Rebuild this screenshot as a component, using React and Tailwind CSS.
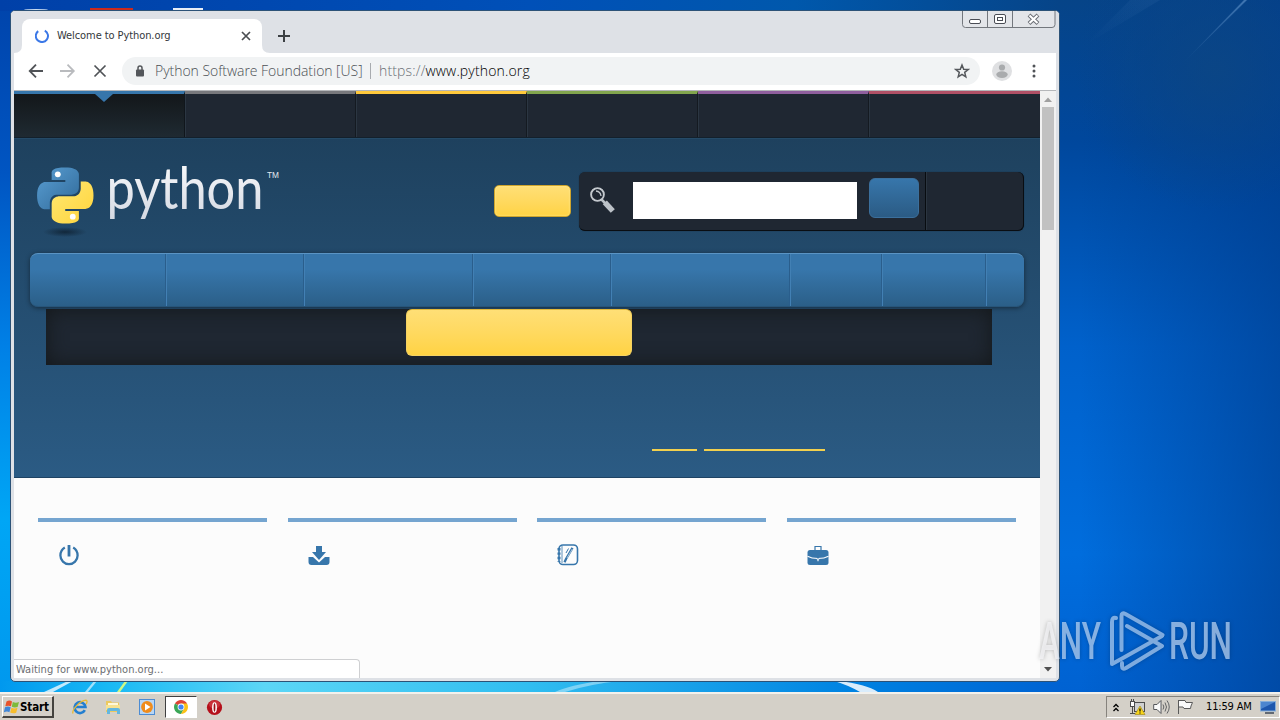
import React from 'react';

const SNAKE =
  'M14.25.18l.9.2.73.26.59.3.45.32.34.34.25.34.16.33.1.3.04.26.02.2-.01.13V8.5l-.05.63-.13.55-.21.46-.26.38-.3.31-.33.25-.35.19-.35.14-.33.1-.3.07-.26.04-.21.02H8.77l-.69.05-.59.14-.5.22-.41.27-.33.32-.27.35-.2.36-.15.37-.1.35-.07.32-.04.27-.02.21v3.06H3.17l-.21-.03-.28-.07-.32-.12-.35-.18-.36-.26-.36-.36-.35-.46-.32-.59-.28-.73-.21-.88-.14-1.05-.05-1.23.06-1.22.16-1.04.24-.87.32-.71.36-.57.4-.44.42-.33.42-.24.4-.16.36-.1.32-.05.24-.01h.16l.06.01h8.16v-.83H6.18l-.01-2.75-.02-.37.05-.34.11-.31.17-.28.25-.26.31-.23.38-.2.44-.18.51-.15.58-.12.64-.1.71-.06.77-.04.84-.02 1.27.05z';

function Wallpaper() {
  return (
    <svg className="absolute inset-0" width="1280" height="692" viewBox="0 0 1280 692">
      <defs>
        <linearGradient id="wl" x1="0" y1="0" x2="0" y2="1">
          <stop offset="0" stopColor="#0044ab" />
          <stop offset=".25" stopColor="#0055c2" />
          <stop offset=".5" stopColor="#0080e6" />
          <stop offset=".75" stopColor="#00a6f5" />
          <stop offset="1" stopColor="#0098ee" />
        </linearGradient>
        <linearGradient id="wr" x1="0" y1="0" x2="0" y2="1">
          <stop offset="0" stopColor="#064488" />
          <stop offset=".2" stopColor="#00479c" />
          <stop offset=".5" stopColor="#0061cb" />
          <stop offset=".8" stopColor="#006ddd" />
          <stop offset="1" stopColor="#0062d2" />
        </linearGradient>
        <linearGradient id="wd" x1="0" y1="0" x2="1" y2="0">
          <stop offset="0" stopColor="#003c8c" stopOpacity="0" />
          <stop offset="1" stopColor="#003c8c" stopOpacity=".62" />
        </linearGradient>
        <radialGradient id="wk" cx="1215" cy="70" r="140" gradientUnits="userSpaceOnUse">
          <stop offset="0" stopColor="#0c4684" stopOpacity=".85" />
          <stop offset="1" stopColor="#0c4684" stopOpacity="0" />
        </radialGradient>
        <linearGradient id="wt" x1="0" y1="0" x2="1" y2="0">
          <stop offset="0" stopColor="#0040a8" />
          <stop offset=".5" stopColor="#0050b8" />
          <stop offset=".75" stopColor="#0058ac" />
          <stop offset="1" stopColor="#064488" />
        </linearGradient>
        <linearGradient id="wb" x1="0" y1="0" x2="1" y2="0">
          <stop offset="0" stopColor="#0098ee" />
          <stop offset=".1" stopColor="#18b8f4" />
          <stop offset=".25" stopColor="#5cd6f6" />
          <stop offset=".5" stopColor="#30bdf0" />
          <stop offset=".8" stopColor="#0083e2" />
          <stop offset="1" stopColor="#0062d2" />
        </linearGradient>
        <linearGradient id="ray" x1="1" y1="0" x2="0" y2="1">
          <stop offset="0" stopColor="#6fa0d4" stopOpacity=".55" />
          <stop offset="1" stopColor="#6fa0d4" stopOpacity="0" />
        </linearGradient>
      </defs>
      <rect width="1060" height="692" fill="url(#wl)" />
      <rect x="1050" width="230" height="692" fill="url(#wr)" />
      <rect x="1080" width="200" height="692" fill="url(#wd)" />
      <rect x="1050" width="230" height="240" fill="url(#wk)" />
      <rect width="1060" height="11" fill="url(#wt)" />
      <rect y="681" width="1060" height="11" fill="url(#wb)" />
      <path d="M1247 0l-3 0L1182 64z" fill="url(#ray)" />
      <path d="M1160 0h-30L1085 45z" fill="url(#ray)" opacity=".15" />
      <path d="M44 692l24-11h5l-20 11z" fill="#fff" opacity=".75" />
      <path d="M85 692l9-11h3l-9 11z" fill="#fff" opacity=".6" />
      <path d="M117 692l8-11h3l-8 11z" fill="#e2ff7a" opacity=".9" />
      <path d="M565 692q25-8 55-11h-20q-30 4-45 11z" fill="#fff" opacity=".4" />
      <path d="M838 681q28 3 40 11h-18q-12-7-26-11z" fill="#fff" opacity=".85" />
      <ellipse cx="36" cy="10" rx="12" ry="1" fill="#c9dcf0" />
      <rect x="90" y="8" width="43" height="3" fill="#cc2a1c" />
      <rect x="173" y="8" width="30" height="3" fill="#e8eef6" />
    </svg>
  );
}

function CaptionButtons() {
  return (
    <svg className="shrink-0" width="94" height="18" viewBox="0 0 94 18" fill="none">
      <path d="M.5 0V13.500q0 3 3 3H90q3 0 3-3V0" stroke="#73777d" fill="#e3e5e9" />
      <path d="M25.500 0V16M50.500 0V16" stroke="#73777d" />
      <rect x="7.500" y="8.500" width="11" height="4" rx="1.500" fill="#fff" stroke="#4a4d55" />
      <rect x="32.500" y="3.500" width="11" height="9" rx="1.500" fill="#fff" stroke="#4a4d55" />
      <rect x="35.500" y="6.500" width="5" height="3" fill="#fff" stroke="#4a4d55" />
      <path d="M67 4l9 8.500M76 4l-9 8.500" stroke="#6a6d74" strokeWidth="4" />
      <path d="M67.500 4.500l8 7.500M75.500 4.500l-8 7.500" stroke="#fff" strokeWidth="2.200" />
    </svg>
  );
}

function TabStrip() {
  return (
    <div className="flex h-[42px] bg-[#dee1e6] pl-[3px]">
      <div className="flex items-end">
        <svg width="8" height="8"><path d="M8 0V8H0Q8 8 8 0" fill="#fff" /></svg>
      </div>
      <div className="mt-2 flex h-[34px] w-[240px] items-center rounded-t-lg bg-white pl-[13px]">
        <svg width="14" height="14" viewBox="0 0 14 14" fill="none">
          <path d="M9.800 1.600A6.100 6.100 0 1 1 3.200 2.100" stroke="#3b78e7" strokeWidth="2" />
        </svg>
        <span className="ml-2 w-[186px] whitespace-nowrap pt-px text-[11px] tracking-[-0.08px] text-[#34373b]">Welcome to Python.org</span>
        <svg className="-ml-[2px]" width="10" height="10" viewBox="0 0 10 10"><path d="M1 1l8 8M9 1L1 9" stroke="#4b4e52" strokeWidth="1.700" /></svg>
      </div>
      <div className="flex items-end">
        <svg width="8" height="8"><path d="M0 0V8H8Q0 8 0 0" fill="#fff" /></svg>
      </div>
      <svg className="ml-2 mt-[19px]" width="12" height="12" viewBox="0 0 12 12"><path d="M6 0V12M0 6H12" stroke="#3c4043" strokeWidth="2" /></svg>
      <div className="ml-auto mr-[3px]"><CaptionButtons /></div>
    </div>
  );
}

function Toolbar() {
  return (
    <div className="flex h-[37px] items-center bg-white pb-[2px] pl-[14px] text-[#5f6368]">
      <svg width="16" height="14" viewBox="0 0 16 14" fill="none" stroke="#505357" strokeWidth="1.800"><path d="M15 7H2M8 .7L1.700 7L8 13.300" /></svg>
      <svg className="ml-4" width="16" height="14" viewBox="0 0 16 14" fill="none" stroke="#b9bbbe" strokeWidth="1.800"><path d="M0 7H13M7.500 .7L13.800 7L7.500 13.300" /></svg>
      <svg className="ml-[17px]" width="14" height="14" viewBox="0 0 14 14" stroke="#505357" strokeWidth="1.700"><path d="M1.500 1.500l11 11M12.500 1.500l-11 11" /></svg>
      <div className="ml-[15px] flex h-7 w-[858px] items-center rounded-full bg-[#f1f3f4] pl-[13px]">
        <svg width="10" height="12" viewBox="0 0 10 12"><path d="M3 5V3a2 2 0 0 1 4 0V5" fill="none" stroke="#54575b" strokeWidth="1.500" /><rect x="1" y="4.500" width="8" height="7" rx="1" fill="#54575b" /></svg>
        <span className="ml-[10px] w-[210px] whitespace-nowrap font-['Open_Sans'] text-[14px] font-light tracking-[-0.04px] text-[#4c5055]">Python Software Foundation [US]</span>
        <span className="ml-[5px] h-4 w-px bg-[#a8abaf]" />
        <span className="ml-2 whitespace-nowrap font-['Open_Sans'] text-[14px] font-light tracking-[0.15px] text-[#6b6f74]">https://<span className="text-black">www.python.org</span></span>
        <svg className="ml-auto mr-[10px]" width="16" height="16" viewBox="0 0 16 16" fill="none" stroke="#55585c" strokeWidth="1.500"><path d="M8 2l1.700 4.200 4.500.3-3.500 2.900 1.100 4.400L8 11.400l-3.800 2.400 1.100-4.400L1.800 6.500l4.500-.3z" /></svg>
      </div>
      <svg className="ml-3" width="20" height="20" viewBox="0 0 20 20"><circle cx="10" cy="10" r="10" fill="#dfe0e2" /><circle cx="10" cy="6.500" r="3.100" fill="#a9abad" /><ellipse cx="10" cy="13.600" rx="5.700" ry="3.300" fill="#a9abad" /></svg>
      <svg className="ml-5" width="4" height="14" viewBox="0 0 4 14" fill="#505357"><circle cx="2" cy="2" r="1.500" /><circle cx="2" cy="7" r="1.500" /><circle cx="2" cy="12" r="1.500" /></svg>
    </div>
  );
}

function MetaNav() {
  const cell = 'w-[171px] border-t-[3px] border-r border-r-[#141a21] shadow-[inset_1px_0_0_#2b3642]';
  return (
    <div className="flex h-[47px] border-b border-[#13202c] bg-[#1f2732]">
      <div className="flex w-[171px] justify-center border-r border-t-[3px] border-r-[#10161c] border-t-[#3776ab] bg-linear-to-b from-[#13171a] to-[#1f2a32] pl-[9px]">
        <svg width="18" height="8"><path d="M0 0H18L9 8z" fill="#3776ab" /></svg>
      </div>
      <div className={`${cell} border-t-[#78797d]`} />
      <div className={`${cell} border-t-[#ffc93c]`} />
      <div className={`${cell} border-t-[#82a64e]`} />
      <div className={`${cell} border-t-[#8f5f9e]`} />
      <div className="w-[171px] border-t-[3px] border-t-[#b05066] shadow-[inset_1px_0_0_#2b3642]" />
    </div>
  );
}

function PythonLogo() {
  return (
    <svg className="overflow-visible" width="250" height="76" viewBox="36 164 250 76">
      <defs>
        <linearGradient id="pb" x1="0" y1="0" x2="1" y2="1"><stop offset="0" stopColor="#5a9fd4" /><stop offset="1" stopColor="#306998" /></linearGradient>
        <linearGradient id="py" x1="1" y1="1" x2="0" y2="0"><stop offset="0" stopColor="#ffe873" /><stop offset="1" stopColor="#ffd43b" /></linearGradient>
        <linearGradient id="pt" x1="0" y1="0" x2="0" y2="1"><stop offset="0" stopColor="#fff" /><stop offset="1" stopColor="#d3d8e2" /></linearGradient>
        <radialGradient id="ps"><stop offset="0" stopColor="#0c1c2b" stopOpacity=".75" /><stop offset="1" stopColor="#0c1c2b" stopOpacity="0" /></radialGradient>
      </defs>
      <ellipse cx="65" cy="232" rx="22" ry="5" fill="url(#ps)" />
      <g transform="translate(37.200 167.400) scale(2.340)">
        <path d={SNAKE} fill="url(#pb)" />
        <path d={SNAKE} fill="url(#py)" transform="rotate(180 12 12)" />
        <circle cx="8.800" cy="2.950" r="1.250" fill="#fff" />
        <circle cx="15.200" cy="21.050" r="1.250" fill="#fff" />
      </g>
      <text x="106.500" y="209" textLength="157" lengthAdjust="spacingAndGlyphs" fontFamily="Lato" fontSize="58" fontWeight="400" fill="url(#pt)">python</text>
      <text x="267" y="178" textLength="12" lengthAdjust="spacingAndGlyphs" fontFamily="Liberation Sans" fontSize="8.500" fill="#e4e9ef">TM</text>
    </svg>
  );
}

const TABS = ['w-[136px]', 'w-[138px]', 'w-[169px]', 'w-[138px]', 'w-[179px]', 'w-[92px]', 'w-[104px]'];

function Header() {
  return (
    <div className="flex h-[340px] flex-col border-b border-[#1e4364] bg-linear-to-b from-[#1e415e] to-[#2b5b84] pl-4 shadow-[inset_0_1px_0_#254a67]">
      <div className="flex h-[115px]">
        <div className="ml-[6px] mt-[26px] w-[458px]"><PythonLogo /></div>
        <div className="mt-[47px] h-8 w-[77px] rounded-[5px] border border-[#cfa52c] bg-linear-to-b from-[#ffdf76] to-[#ffd343] shadow-[inset_0_0_2px_#ffee9f]" />
        <div className="ml-2 mt-[34px] flex h-[59px] w-[445px] rounded-md border-b border-r border-[#090d12] bg-[#1f2732] shadow-[0_0_1px_#142330]">
          <svg className="ml-[11px] mt-[15px]" width="27" height="28" viewBox="0 0 27 28">
            <path d="M11.500 12.500l4 4" stroke="#bcc2c8" strokeWidth="2.500" />
            <path d="M14.800 15.300l8 8.700" stroke="#bcc2c8" strokeWidth="5.500" />
            <circle cx="7.500" cy="7.500" r="6.400" fill="#1f2732" stroke="#c3c8cd" strokeWidth="1.900" />
            <path d="M6 4q4.500 .5 5 5" fill="none" stroke="#c3c8cd" strokeWidth="1.300" />
          </svg>
          <div className="ml-4 mt-[10px] h-[37px] w-[224px] bg-white" />
          <div className="ml-3 mt-[6px] h-10 w-[50px] rounded-md border border-[#3b6f9c] bg-linear-to-b from-[#3776ab] to-[#2b5b84]" />
          <div className="ml-[6px] h-full w-px bg-[#080c10]" />
          <div className="h-full w-px bg-[#2b3540]" />
        </div>
      </div>
      <div className="flex h-[54px] w-[994px] rounded-lg border-b border-t border-b-[#285579] border-t-[#5a94c4] bg-linear-to-b from-[#3776ab] from-30% to-[#2b5f88] shadow-[0_1px_5px_rgba(0,0,0,.45)]">
        {TABS.map((w, i) => (
          <div key={i} className={`${w} flex justify-end`}>
            <div className="w-px bg-[#2a5e8c]" />
            <div className="-mr-px w-px bg-[#4280b4]" />
          </div>
        ))}
      </div>
      <div className="ml-4 mt-[2px] flex h-14 w-[946px] justify-center bg-[#1f2732] shadow-[inset_0_0_20px_#14181a]">
        <div className="h-[47px] w-[226px] rounded-md border border-[#f5d262] border-t-[#e3b93a] bg-linear-to-b from-[#ffdf76] to-[#ffd343]" />
      </div>
      <div className="ml-[622px] mt-[84px] flex gap-[7px]">
        <div className="h-[2px] w-[45px] bg-[#f2d04e]" />
        <div className="h-[2px] w-[121px] bg-[#f2d04e]" />
      </div>
    </div>
  );
}

const PowerIcon = () => (
  <svg width="22" height="22" viewBox="0 0 22 22" fill="none" stroke="#3776ab" strokeWidth="2.300">
    <path d="M6.800 3.400Q2.400 6 2.400 11.500A8.500 8.500 0 0 0 19.600 11.500Q19.600 6 15.200 3.400" />
    <path d="M11 1V12.500" strokeWidth="2.800" />
  </svg>
);
const DownloadIcon = () => (
  <svg width="22" height="22" viewBox="0 0 22 22" fill="#3776ab">
    <path d="M8 2h6v6h4l-7 8L4 8h4z" />
    <path d="M.5 13H5l6 5.500L17 13h4.500v5q0 3-3 3h-15q-3 0-3-3z" />
  </svg>
);
const DocIcon = () => (
  <svg width="22" height="22" viewBox="0 0 22 22" fill="none" stroke="#3776ab">
    <rect x="2" y="1" width="18.500" height="19.500" rx="4" strokeWidth="1.600" />
    <path d="M2 4v14" strokeWidth="3" strokeDasharray="2.400 2" />
    <path d="M5 2v17" strokeWidth=".8" />
    <path d="M15.500 3.800L9 15l-1.500 3.300" strokeWidth="2.300" />
    <path d="M11.500 4.500L9 9" strokeWidth="1" />
    <path d="M15.300 5L10 14" stroke="#fcfcfc" strokeWidth=".6" />
  </svg>
);
const CaseIcon = () => (
  <svg width="22" height="22" viewBox="0 0 22 22">
    <path d="M8 6V2.500h6V6" fill="none" stroke="#3776ab" strokeWidth="1.200" />
    <rect x=".5" y="6" width="21" height="15" rx="2.500" fill="#3776ab" />
    <path d="M.5 12.200q4 2.300 10.500 2.300t10.500-2.300" fill="none" stroke="#fcfcfc" strokeWidth="1.100" />
    <path d="M9.300 14.200h3.400l-1.700 3.600z" fill="#fcfcfc" />
    <path d="M10.300 13h1.400l-.7 3.500z" fill="#3776ab" />
  </svg>
);

function Widgets() {
  return (
    <div className="flex min-h-0 flex-1 flex-col bg-[#fcfcfc]">
      <div className="ml-6 mt-10 grid h-[100px] w-[978px] grid-cols-4 gap-x-[20.600px]">
        {[PowerIcon, DownloadIcon, DocIcon, CaseIcon].map((Icon, i) => (
          <div key={i} className="border-t-4 border-[#75a5d0] pl-5 pt-[22px]"><Icon /></div>
        ))}
      </div>
      <div className="mt-auto h-[19px] w-[346px] rounded-tr border-r border-t border-[#cfd0d2] bg-white pl-[2px] text-[11px] leading-[19px] tracking-[0.02px] text-[#6b6e72]">Waiting for www.python.org...</div>
    </div>
  );
}

function Scrollbar() {
  return (
    <div className="flex w-4 flex-col items-center bg-[#f1f1f1]">
      <svg width="16" height="16"><path d="M4 11h8L8 6.500z" fill="#a0a0a0" /></svg>
      <div className="h-[123px] w-3 bg-[#c1c1c1]" />
      <svg className="mt-auto" width="16" height="17"><path d="M4 6h8L8 10.500z" fill="#505050" /></svg>
    </div>
  );
}

function Browser() {
  return (
    <div className="absolute left-[10px] top-[10px] flex h-[672px] w-[1050px] flex-col overflow-hidden rounded-[5px] border border-[#2c5277] bg-[#dee1e6]">
      <TabStrip />
      <div className="mx-[3px] flex min-h-0 flex-1 flex-col">
        <Toolbar />
        <div className="h-px bg-[#b5b7ba]" />
        <div className="mb-[3px] flex min-h-0 flex-1">
          <div className="flex w-[1026px] flex-col">
            <MetaNav />
            <Header />
            <Widgets />
          </div>
          <Scrollbar />
        </div>
      </div>
    </div>
  );
}

function Watermark() {
  return (
    <svg className="absolute left-[1020px] top-[590px] drop-shadow-[0_0_2px_rgba(0,0,0,.3)]" width="230" height="100" viewBox="1020 590 230 100">
      <defs>
        <linearGradient id="wm" x1="1039" y1="0" x2="1075" y2="0" gradientUnits="userSpaceOnUse">
          <stop offset=".5" stopColor="#f4f5f7" />
          <stop offset=".6" stopColor="#b4d0f2" />
        </linearGradient>
      </defs>
      <g opacity=".75" fontFamily="Roboto" fontSize="51" fontWeight="500">
        <text x="1039" y="659" textLength="62" lengthAdjust="spacingAndGlyphs" fill="url(#wm)">ANY</text>
        <text x="1169" y="659" textLength="63" lengthAdjust="spacingAndGlyphs" fill="#b4d0f2">RUN</text>
      </g>
      <g fill="none" stroke="#a9caf0" strokeWidth="4" strokeLinejoin="round" strokeLinecap="round" opacity=".75">
        <path d="M1116 618q-4-1-4 4v42l11-6 39-22" />
        <path d="M1121.500 650V616q0-4 4-2l37 21" />
        <path d="M1127 626l35 20-36 22q-4 2-4-2v-3" />
      </g>
    </svg>
  );
}

function Taskbar() {
  return (
    <div className="relative flex h-7 items-center border-t-2 border-[#f3f1ec] bg-[#d4d0c8] pl-[2px]">
      <div className="flex h-[22px] w-[52px] items-center border border-b-2 border-r-2 border-b-[#45433f] border-l-white border-r-[#45433f] border-t-white pl-px">
        <svg width="16" height="16" viewBox="0 0 16 16">
          <path d="M2.500 2.500q3-1.800 5.500 0L7 7.300Q4.500 6 1.300 7.300z" fill="#e8532b" />
          <path d="M8.800 3q3 1.500 6.200 0l-1.400 5Q10.500 9 7.800 7.700z" fill="#7dba3a" />
          <path d="M1 8.300q3-1.500 5.700 0l-1.300 4.900Q3 12-.2 13.300z" fill="#3f86d8" />
          <path d="M7.500 8.700q2.700 1.500 6 0l-1.300 5Q9 15 6.200 13.500z" fill="#f7bd2c" />
        </svg>
        <span className="pt-[2px] text-[11.500px] font-bold tracking-[-0.1px] text-black">Start</span>
      </div>
      <svg className="ml-[18px]" width="16" height="16" viewBox="0 0 16 16" fill="none">
        <path d="M12.800 11.200A5.400 5.400 0 1 1 13.400 8H4" stroke="#247fd0" strokeWidth="2.700" />
        <path d="M1 14.500C-.5 11 8 1.500 14 1.200q2 .5.200 4" stroke="#e8b932" strokeWidth="1.300" />
      </svg>
      <svg className="ml-[17px]" width="16" height="16" viewBox="0 0 16 16">
        <path d="M1 2h5l1 1.500h7V13H1z" fill="#ecc95f" />
        <path d="M3 4h10v3H3z" fill="#fff8da" /><path d="M1 6h14v5H1z" fill="#f7e291" />
        <path d="M2 15V11q0-2 2-2h9q2 0 2 2v4h-3v-3H5v3z" fill="#64b7df" />
      </svg>
      <svg className="ml-[18px]" width="16" height="16" viewBox="0 0 16 16">
        <rect x=".5" y=".5" width="15" height="15" fill="#b8d6f4" stroke="#4c8cd3" />
        <circle cx="8" cy="8" r="5.900" fill="#f08c1b" /><path d="M6 4.500L11.500 8L6 11.500z" fill="#fff" />
      </svg>
      <div className="ml-[10px] flex h-[22px] w-8 items-center justify-center border border-b-white border-l-[#404040] border-r-white border-t-[#404040] bg-white">
        <svg width="14" height="14" viewBox="0 0 14 14">
          <path d="M7 7L.94 3.500A7 7 0 0 1 13.060 3.500z" fill="#dd4335" />
          <path d="M7 7L.94 3.500A7 7 0 0 0 7 14l3-5z" fill="#3aa757" />
          <path d="M7 7V3.500h6.060A7 7 0 0 1 7 14l3-5.300z" fill="#fbc116" />
          <circle cx="7" cy="7" r="3.400" fill="#fff" /><circle cx="7" cy="7" r="2.600" fill="#4285f4" />
        </svg>
      </div>
      <svg className="ml-[9px]" width="17" height="17" viewBox="0 0 17 17">
        <circle cx="8.500" cy="8.500" r="7.600" fill="#b5101b" /><ellipse cx="8.500" cy="5.500" rx="5.500" ry="4" fill="#e0525a" opacity=".5" />
        <ellipse cx="8.500" cy="8.500" rx="2.400" ry="5.300" fill="#fff" /><ellipse cx="8.500" cy="8.500" rx=".9" ry="4.200" fill="#9b1018" />
      </svg>
      <div className="ml-auto flex h-[22px] w-[174px] items-center border border-b-white border-l-[#86837d] border-r-white border-t-[#86837d] pl-[6px]">
        <svg width="6" height="9" viewBox="0 0 6 9" fill="none" stroke="#000" strokeWidth="1.300"><path d="M.5 4L3 1.500L5.500 4M.5 8L3 5.500L5.500 8" /></svg>
        <svg className="ml-[10px]" width="17" height="16" viewBox="0 0 17 16">
          <rect x="5.500" y="3.500" width="10" height="9" fill="#cfd0d0" stroke="#4c4c4c" />
          <rect x="1.500" y="2.500" width="4" height="5" fill="#fff" stroke="#4c4c4c" /><path d="M2.500 2V0M4.500 2V0M3.500 8v7M1 14.500h5" stroke="#4c4c4c" />
          <path d="M11 7l5 8.500H6z" fill="#f8d51a" stroke="#9a8210" strokeWidth=".6" /><path d="M11 9.500v3M11 13.500v1" stroke="#000" strokeWidth="1.200" />
        </svg>
        <svg className="ml-[7px]" width="17" height="16" viewBox="0 0 17 16" fill="none" stroke="#55575a">
          <path d="M.7 5.500H4L8 1.500v13L4 10.500H.7z" fill="#fafafa" />
          <path d="M10 5.500q1.700 2.500 0 5M12 3.500q3 4.500 0 9M14 1.500q4.500 6.500 0 13" strokeWidth=".9" />
        </svg>
        <svg className="ml-[7px]" width="17" height="16" viewBox="0 0 17 16">
          <path d="M1.500 1v14M1.500 1.500H8L9 3.500h6.500L14 7l-.5 2.500H7L6 8H1.500" fill="#fafafa" stroke="#5a5a5a" />
        </svg>
        <span className="ml-3 w-[48px] whitespace-nowrap pt-px text-[11px] tracking-[-0.15px] text-black">11:59 AM</span>
        <svg className="ml-[6px]" width="16" height="14" viewBox="0 0 16 14">
          <rect x=".5" y="1.500" width="15" height="9.500" fill="#1d56ad" stroke="#86add8" /><path d="M1 2h14L1 9z" fill="#4c85cf" /><path d="M5 13h9" stroke="#3e4958" strokeWidth="1.500" />
        </svg>
      </div>
    </div>
  );
}

export default function App() {
  return (
    <div className="relative flex h-[720px] w-[1280px] flex-col overflow-hidden font-['DejaVu_Sans_Condensed','Noto_Sans',sans-serif]">
      <div className="relative h-[692px]">
        <Wallpaper />
        <Browser />
        <Watermark />
      </div>
      <Taskbar />
    </div>
  );
}
